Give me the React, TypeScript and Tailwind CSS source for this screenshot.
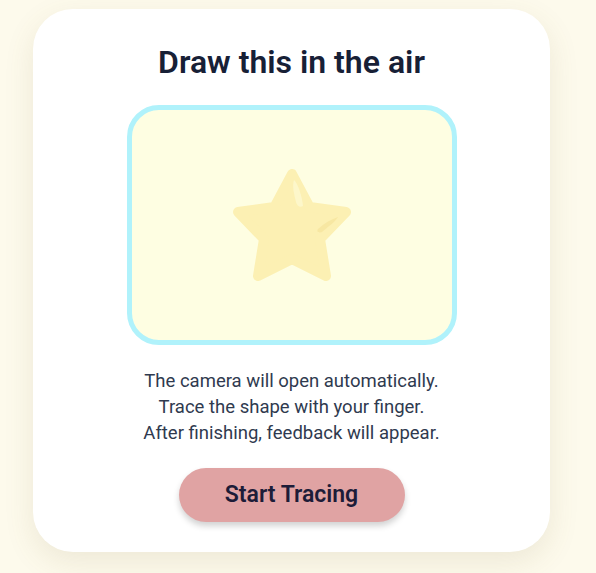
import React from 'react';

const Star: React.FC = () => (
    <svg width="124" height="118" viewBox="0 0 120 118" className="opacity-90">
        <polygon
            points="60,8 77.6,41 114,46 88,73 94,110 60,93 26,110 32,73 6,46 42.4,41"
            fill="#fcefae"
            stroke="#fcefae"
            strokeWidth="10"
            strokeLinejoin="round"
        />
        <path d="M62 14 C66 18 70 30 71 40 C68 42 65 40 64 36 C62 28 60 20 62 14 Z" fill="#fdf7c8" />
        <path d="M86 63 C92 57 100 53 106 51 C104 55 96 61 90 66 C87 67 84 66 86 63 Z" fill="#f7e59c" />
    </svg>
);

export default function App() {
    return (
        <div className="min-h-[573px] w-full bg-[#fdfaec] flex justify-start pl-[33px] pt-[9px] pb-[21px]" style={{ fontFamily: 'Roboto, "Noto Sans", sans-serif' }}>
            <div className="w-[517px] bg-white rounded-[40px] shadow-[0_10px_30px_rgba(120,110,60,0.12)] flex flex-col items-center pt-[34px] pb-[30px]">
                <h2 className="text-[32px] leading-[38px] font-semibold text-[#172036]">Draw this in the air</h2>

                <div className="mt-[24px] w-[330px] h-[240px] rounded-[32px] border-[5px] border-[#b0f2fb] bg-[#fefee2] flex items-center justify-center">
                    <Star />
                </div>

                <div className="mt-[23px] text-center text-[18.5px] leading-[26px] text-[#2f3a4f]">
                    <p>The camera will open automatically.</p>
                    <p>Trace the shape with your finger.</p>
                    <p>After finishing, feedback will appear.</p>
                </div>

                <button className="mt-[22px] w-[226px] h-[54px] rounded-full bg-[#e0a3a3] text-[23px] font-semibold text-[#1d1c38] shadow-[0_4px_6px_rgba(0,0,0,0.18)]">
                    Start Tracing
                </button>
            </div>
        </div>
    );
}
